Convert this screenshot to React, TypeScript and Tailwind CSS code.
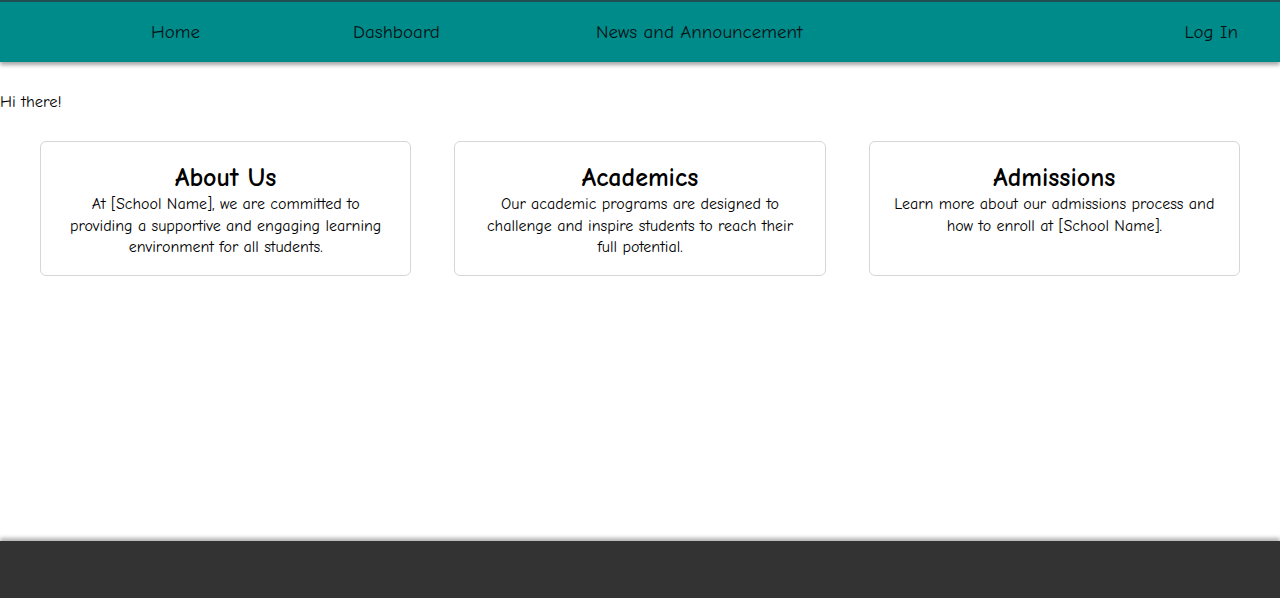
const font = "font-['Comic_Sans_MS','Comic_Neue',cursive]";

const CARDS = [
  {
    title: "About Us",
    body: "At [School Name], we are committed to providing a supportive and engaging learning environment for all students.",
  },
  {
    title: "Academics",
    body: "Our academic programs are designed to challenge and inspire students to reach their full potential.",
  },
  {
    title: "Admissions",
    body: "Learn more about our admissions process and how to enroll at [School Name].",
  },
];

export default function App() {
  return (
    <div className={`${font} flex flex-col min-h-[598px] bg-white text-black`}>
      <nav className="h-[62px] bg-[#008b8b] border-t-2 border-[#1f4f52] shadow-[0_3px_4px_rgba(0,0,0,0.35)] flex items-center text-[19px] font-medium relative z-10">
        <a className="ml-[151px] text-[#061214]">Home</a>
        <a className="ml-[153px] text-[#061214]">Dashboard</a>
        <a className="ml-[156px] text-[#061214]">News and Announcement</a>
        <a className="ml-auto mr-[42px] text-[#061214]">Log In</a>
      </nav>

      <main className="flex-1">
        <p className="mt-[30px] text-[16.5px] leading-5">Hi there!</p>
        <div className="grid grid-cols-3 gap-[43px] px-[40px] mt-[29px]">
          {CARDS.map((c) => (
            <div
              key={c.title}
              className="h-[135px] border border-[#d6d6d6] rounded-md px-[22px] pt-[20px] text-center"
            >
              <h2 className="text-[26px] font-bold leading-[32px]">{c.title}</h2>
              <p className="text-[16px] leading-[21.5px] font-medium">{c.body}</p>
            </div>
          ))}
        </div>
      </main>

      <footer className="h-[57px] bg-[#333333] shadow-[0_-3px_4px_rgba(0,0,0,0.3)]" />
    </div>
  );
}
